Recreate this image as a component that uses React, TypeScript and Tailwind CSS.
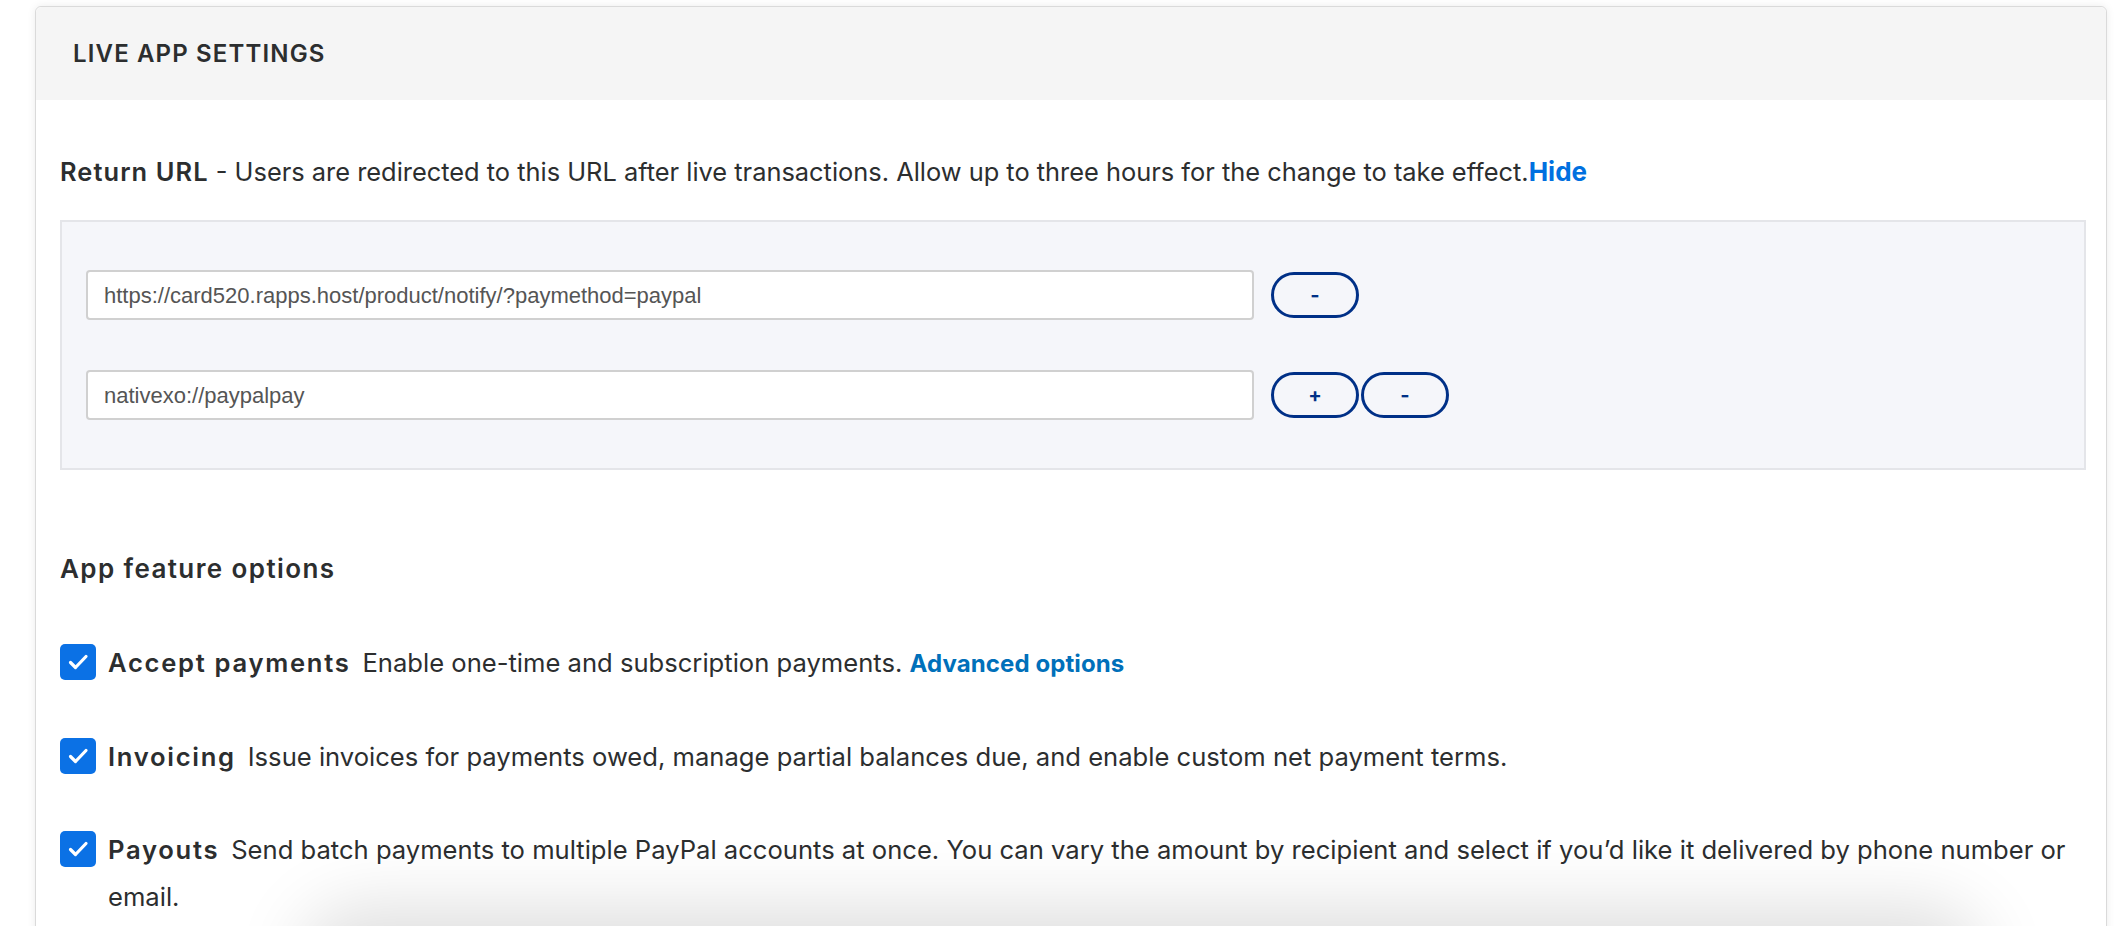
// Live app settings panel
const inter = { fontFamily: 'Inter, "Noto Sans", sans-serif' };

function Check() {
  return (
    <span className="mt-[5px] flex h-[36px] w-[36px] shrink-0 items-center justify-center rounded-[5px] bg-[#0b71e5]">
      <svg width="36" height="36" viewBox="0 0 36 36" fill="none">
        <polyline
          points="10.5 18.5 15.5 23.5 26 12.5"
          stroke="white"
          strokeWidth="3.2"
          strokeLinecap="round"
          strokeLinejoin="round"
        />
      </svg>
    </span>
  );
}

function PillButton({ label }: { label: string }) {
  return (
    <button className="flex h-[46px] w-[88px] items-center justify-center rounded-full border-[3px] border-[#003087] text-[20px] font-bold text-[#003087] leading-none">
      {label}
    </button>
  );
}

function UrlRow({ value, plus }: { value: string; plus?: boolean }) {
  return (
    <div className="flex items-center">
      <div
        className="flex h-[50px] w-[1168px] items-center rounded-[4px] border-2 border-[#d0d0d0] bg-white pl-[16px] text-[22px] text-[#555555]"
        style={{ fontFamily: '"Liberation Sans", Arial, sans-serif' }}
      >
        {value}
      </div>
      <div className="ml-[17px] flex gap-[2px]">
        {plus && <PillButton label="+" />}
        <PillButton label="-" />
      </div>
    </div>
  );
}

function Feature({ title, children }: { title: string; children: React.ReactNode }) {
  return (
    <div className="flex items-start gap-[12px]">
      <Check />
      <p className="text-[25.6px] leading-[47px] text-[#2c2e2f]">
        <span className="mr-[12px] font-semibold tracking-[1.7px]">{title}</span>
        {children}
      </p>
    </div>
  );
}

export default function App() {
  return (
    <div className="relative h-[926px] overflow-hidden bg-white pl-[35px] pr-[17px] pt-[6px]" style={inter}>
      <div className="rounded-t-[6px] border border-[#dadada] bg-white shadow-[0_0_8px_rgba(0,0,0,0.08)]">
        {/* header */}
        <div className="flex h-[93px] items-center rounded-t-[6px] bg-[#f5f5f5] pl-[37px]">
          <h2 className="text-[24px] font-semibold tracking-[1.15px] text-[#2c2e2f]">LIVE APP SETTINGS</h2>
        </div>

        <div className="pl-[24px] pr-[20px] pt-[56px] text-[#2c2e2f]">
          <p className="text-[25.4px] leading-[32px]">
            <span className="font-semibold tracking-[1.1px]">Return URL</span> - Users are redirected to this URL after
            live transactions. Allow up to three hours for the change to take effect.
            <a className="font-bold text-[#0070e0] text-[26px]">Hide</a>
          </p>

          <div className="mt-[32px] flex flex-col gap-[50px] border-2 border-[#e4e5e9] bg-[#f5f6fa] pb-[48px] pl-[24px] pt-[48px]">
            <UrlRow value="https://card520.rapps.host/product/notify/?paymethod=paypal" />
            <UrlRow value="nativexo://paypalpay" plus />
          </div>

          <h3 className="mt-[81px] text-[26px] font-semibold leading-[36px] tracking-[1.4px]">App feature options</h3>

          <div className="mt-[52px] flex flex-col gap-[46px] pb-[40px]">
            <Feature title="Accept payments">
              Enable one-time and subscription payments.{' '}
              <a className="text-[24px] font-bold tracking-[0.1px] text-[#0070ba]">Advanced options</a>
            </Feature>
            <Feature title="Invoicing">
              Issue invoices for payments owed, manage partial balances due, and enable custom net payment terms.
            </Feature>
            <Feature title="Payouts">
              Send batch payments to multiple PayPal accounts at once. You can vary the amount by recipient and select if
              you’d like it delivered by phone number or email.
            </Feature>
          </div>
        </div>
      </div>

      {/* shadow of a floating bar below the fold */}
      <div className="pointer-events-none absolute bottom-[-70px] left-[330px] right-[170px] h-[60px] rounded-[30px] bg-white shadow-[0_0_70px_30px_rgba(0,0,0,0.13)]" />
    </div>
  );
}
